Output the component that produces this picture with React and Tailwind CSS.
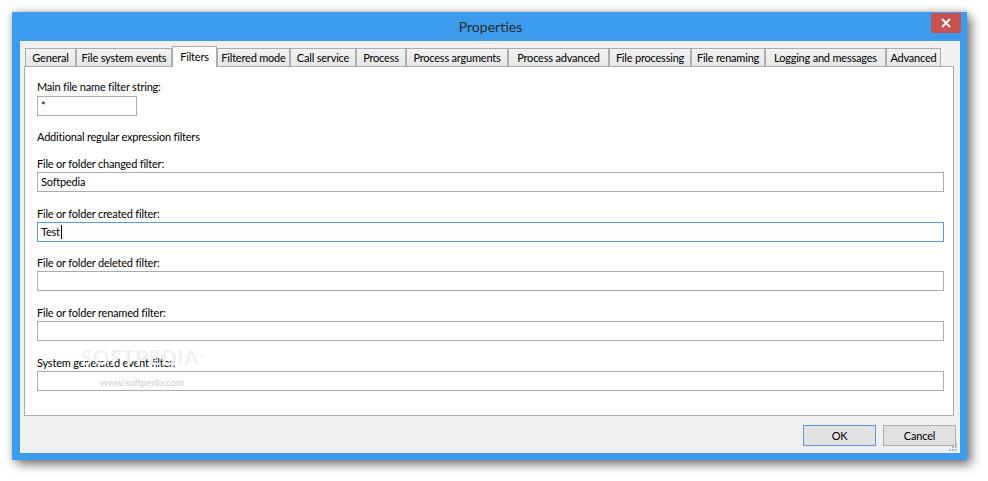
import { useState } from "react";

const tabs = [
  { label: "General", w: "w-[51px]" },
  { label: "File system events", w: "w-[96px]" },
  { label: "Filters", w: "w-[45px]" },
  { label: "Filtered mode", w: "w-[73px]" },
  { label: "Call service", w: "w-[66px]" },
  { label: "Process", w: "w-[50px]" },
  { label: "Process arguments", w: "w-[102px]" },
  { label: "Process advanced", w: "w-[101px]" },
  { label: "File processing", w: "w-[82px]" },
  { label: "File renaming", w: "w-[74px]" },
  { label: "Logging and messages", w: "w-[121px]" },
  { label: "Advanced", w: "w-[55px]" },
];

const filters = [
  { label: "File or folder changed filter:", value: "Softpedia", mt: "mt-[11px]" },
  { label: "File or folder created filter:", value: "Test", mt: "mt-[14px]", focused: true },
  { label: "File or folder deleted filter:", value: "", mt: "mt-[13px]" },
  { label: "File or folder renamed filter:", value: "", mt: "mt-[14px]" },
  { label: "System generated event filter:", value: "", mt: "mt-[14px]" },
];

const TextBox = ({ value, focused, className = "" }) => (
  <div
    className={`flex h-[20px] items-center border bg-white px-[3px] leading-[18px] text-black ${
      focused ? "border-[#569de5]" : "border-[#acacac]"
    } ${className}`}
  >
    <span>{value}</span>
    {focused && <span className="ml-[1px] h-[14px] w-[1px] bg-black" />}
  </div>
);

const SizeGrip = () => (
  <svg width="10" height="10" viewBox="0 0 10 10" className="absolute right-[2px] bottom-[1px]">
    <rect x="7" y="1" width="2" height="2" fill="#b9b9b9" />
    <rect x="4" y="4" width="2" height="2" fill="#b9b9b9" />
    <rect x="7" y="4" width="2" height="2" fill="#b9b9b9" />
    <rect x="1" y="7" width="2" height="2" fill="#b9b9b9" />
    <rect x="4" y="7" width="2" height="2" fill="#b9b9b9" />
    <rect x="7" y="7" width="2" height="2" fill="#b9b9b9" />
  </svg>
);

const App = () => {
  const [active] = useState("Filters");

  return (
    <div className="h-[481px] w-[988px] bg-white pl-[12px] pt-[12px] font-['Lato','Liberation_Sans',sans-serif]">
      <div className="flex h-[448px] w-[955px] flex-col bg-[#3c9bec] pl-[8px] pr-[7px] pb-[7px] shadow-[0_0_8px_rgba(0,0,0,0.25),5px_5px_10px_rgba(0,0,0,0.45)]">
        {/* title bar */}
        <div className="flex h-[29px] items-start justify-between">
          <div className="w-[30px]" />
          <div className="pt-[6px] text-[14px] leading-[18px] text-[#2b2b2b]">Properties</div>
          <button className="mt-[1px] mr-[-1px] flex h-[20px] w-[30px] items-center justify-center bg-[#c75050]">
            <svg width="10" height="10" viewBox="0 0 10 10">
              <path d="M1 1 L9 9 M9 1 L1 9" stroke="white" strokeWidth="1.8" />
            </svg>
          </button>
        </div>

        {/* client area */}
        <div className="relative flex flex-1 flex-col bg-[#f0f0f0] pl-[4px] pr-[6px] pt-[5px] pb-[7px] text-[11px] tracking-[-0.2px] text-black">
          <div className="ml-[1px] flex h-[20px] items-start whitespace-nowrap">
            {tabs.map(t =>
              t.label === active ? (
                <div
                  key={t.label}
                  className={`${t.w} relative z-10 flex h-[21px] items-start justify-center border border-b-0 border-[#acacac] bg-white pt-[3px] leading-[14px]`}
                >
                  {t.label}
                </div>
              ) : (
                <div
                  key={t.label}
                  className={`${t.w} mt-[2px] flex h-[18px] items-center justify-center border border-b-0 border-[#acacac] bg-gradient-to-b from-[#f2f2f2] to-[#e6e6e6] pt-[1px] leading-[14px]`}
                >
                  {t.label}
                </div>
              )
            )}
          </div>

          {/* tab page */}
          <div className="relative flex flex-1 flex-col border border-[#acacac] bg-white pl-[12px] pr-[9px] pt-[12px]">
            <div className="h-[16px] leading-[16px]">Main file name filter string:</div>
            <TextBox value="*" className="mt-[1px] w-[100px]" />

            <div className="mt-[13px] h-[16px] leading-[16px]">Additional regular expression filters</div>

            {filters.map(f => (
              <div key={f.label} className={f.mt}>
                <div className="h-[16px] leading-[16px]">{f.label}</div>
                <TextBox value={f.value} focused={f.focused} />
              </div>
            ))}

            <div className="pointer-events-none absolute left-[56px] top-[281px] text-[20px] font-bold leading-[18px] tracking-[1px] text-[#f0f0f0]">
              SOFTPEDIA<span className="align-top text-[7px]">™</span>
            </div>
            <div className="pointer-events-none absolute left-[75px] top-[309px] text-[10px] leading-[12px] text-[#cfcfcf]">
              www.softpedia.com
            </div>
          </div>

          {/* buttons */}
          <div className="mt-[9px] mr-[-2px] flex justify-end gap-[7px]">
            <button className="h-[21px] w-[73px] border border-[#569de5] bg-[#e1e1e1] leading-[18px]">OK</button>
            <button className="h-[21px] w-[73px] border border-[#adadad] bg-[#e1e1e1] leading-[18px]">Cancel</button>
          </div>
          <SizeGrip />
        </div>
      </div>
    </div>
  );
};

export default App;
